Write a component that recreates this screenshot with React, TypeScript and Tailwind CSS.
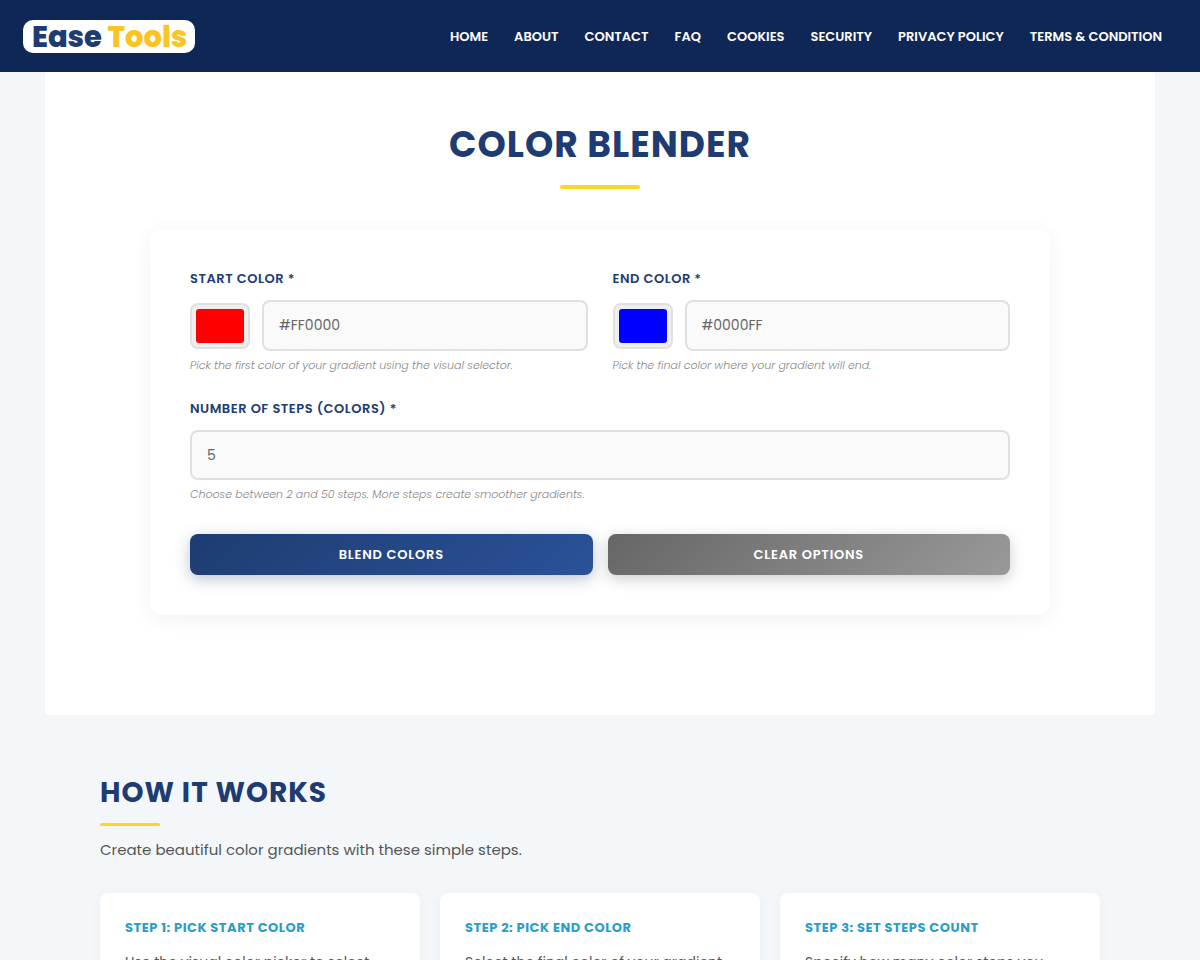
import { useState } from "react";

const links = ["Home", "About", "Contact", "FAQ", "Cookies", "Security", "Privacy Policy", "Terms & Condition"];

const steps = [
  { title: "Step 1: Pick Start Color", text: "Use the visual color picker to select" },
  { title: "Step 2: Pick End Color", text: "Select the final color of your gradient" },
  { title: "Step 3: Set Steps Count", text: "Specify how many color steps you" },
];

const labelClass = "block text-[13px] leading-5 font-semibold tracking-[0.04em] uppercase text-[#1e3c72]";
const fieldClass =
  "w-full min-w-0 rounded-lg border-2 border-[#e0e0e0] bg-[#fafafa] px-[15px] text-sm text-[#666] outline-none focus:border-[#1e3c72]";
const hintClass = "mt-[6px] text-[11px] leading-4 font-light italic text-[#888]";
const buttonClass = "h-[41px] rounded-lg text-[13px] font-semibold tracking-[0.06em] uppercase text-white";

const Header = () => (
  <header className="flex min-h-[72px] items-center justify-between bg-[#0f2756] pl-[23px] pr-[38px]">
    <a href="#" className="flex h-[33px] items-center rounded-[10px] bg-white pt-[2px] pr-2 pl-[9px] text-[29px] leading-none font-extrabold whitespace-nowrap text-[#1e3c72]">
      Ease&nbsp;<span className="text-[#fbc423]">Tools</span>
    </a>
    <nav className="pt-[2px]">
      <ul className="flex gap-[26px] text-[13px] font-semibold uppercase text-white">
        {links.map((link) => (
          <li key={link}>
            <a href="#" className="whitespace-nowrap hover:text-[#f7dc1e]">{link}</a>
          </li>
        ))}
      </ul>
    </nav>
  </header>
);

interface ColorFieldProps {
  id: string;
  label: string;
  initial: string;
  hint: string;
}

const ColorField = ({ id, label, initial, hint }: ColorFieldProps) => {
  const [color, setColor] = useState(initial);

  return (
    <div>
      <label htmlFor={id} className={labelClass}>{label}</label>
      <div className="mt-[11px] flex items-center gap-3">
        <input
          id={id}
          type="color"
          value={color}
          onChange={(e) => setColor(e.target.value)}
          className="h-[46px] w-[60px] shrink-0 cursor-pointer rounded-lg border-2 border-[#e0e0e0] bg-[#efefef] p-1 [&::-webkit-color-swatch]:rounded-[3px] [&::-webkit-color-swatch]:border-0 [&::-webkit-color-swatch-wrapper]:p-0"
        />
        <input
          type="text"
          aria-label={`${label} hex value`}
          value={color.toUpperCase()}
          readOnly
          className={`${fieldClass} h-[51px]`}
        />
      </div>
      <p className={hintClass}>{hint}</p>
    </div>
  );
};

const Blender = () => {
  const [count, setCount] = useState("5");

  return (
    <main className="mx-auto w-[92.5%] max-w-[1200px] rounded-b-sm bg-white px-5 pt-[49px] pb-[100px]">
      <h1 className="text-center text-4xl leading-[48px] font-bold tracking-[1px] uppercase text-[#1e3c72]">Color Blender</h1>
      <div className="mx-auto mt-4 h-1 w-20 rounded-sm bg-[#f5d927]" />

      <form
        className="mx-auto mt-10 max-w-[900px] rounded-xl bg-white p-10 shadow-[0_4px_20px_rgba(0,0,0,0.06)]"
        onSubmit={(e) => e.preventDefault()}
      >
        <div className="grid grid-cols-2 gap-[25px]">
          <ColorField
            id="start-color"
            label="Start Color *"
            initial="#ff0000"
            hint="Pick the first color of your gradient using the visual selector."
          />
          <ColorField
            id="end-color"
            label="End Color *"
            initial="#0000ff"
            hint="Pick the final color where your gradient will end."
          />
        </div>

        <div className="mt-[26px]">
          <label htmlFor="steps" className={labelClass}>Number of Steps (Colors) *</label>
          <input
            id="steps"
            type="text"
            inputMode="numeric"
            value={count}
            onChange={(e) => setCount(e.target.value)}
            className={`${fieldClass} mt-[11px] block h-[50px]`}
          />
          <p className={hintClass}>Choose between 2 and 50 steps. More steps create smoother gradients.</p>
        </div>

        <div className="mt-8 grid grid-cols-2 gap-[15px]">
          <button
            type="submit"
            className={`${buttonClass} bg-[linear-gradient(135deg,#1e3c72,#2a5298)] shadow-[0_4px_15px_rgba(30,60,114,0.3)]`}
          >
            Blend Colors
          </button>
          <button
            type="reset"
            onClick={() => setCount("5")}
            className={`${buttonClass} bg-[linear-gradient(135deg,#666,#999)] shadow-[0_4px_15px_rgba(0,0,0,0.2)]`}
          >
            Clear Options
          </button>
        </div>
      </form>
    </main>
  );
};

const HowItWorks = () => (
  <section className="mx-auto max-w-[1040px] px-5 pt-[58px] pb-14">
    <h2 className="text-[28px] leading-10 font-bold tracking-[1px] uppercase text-[#1e3c72]">How It Works</h2>
    <div className="mt-[10px] h-[3px] w-[60px] rounded-sm bg-[#f5d927]" />
    <p className="mt-3 text-[15px] leading-6 text-[#555]">Create beautiful color gradients with these simple steps.</p>

    <div className="mt-[31px] grid grid-cols-3 gap-5">
      {steps.map((step) => (
        <article key={step.title} className="rounded-lg bg-white p-[25px] shadow-[0_2px_10px_rgba(0,0,0,0.05)]">
          <h3 className="text-[13px] leading-5 font-bold tracking-[0.04em] uppercase text-[#2a9dc8]">{step.title}</h3>
          <p className="mt-3 text-sm leading-6 text-[#555]">{step.text}</p>
        </article>
      ))}
    </div>
  </section>
);

const App = () => (
  <div className="min-h-screen bg-[#f3f7fa] font-['Poppins','Inter',sans-serif]">
    <Header />
    <Blender />
    <HowItWorks />
  </div>
);

export default App;
